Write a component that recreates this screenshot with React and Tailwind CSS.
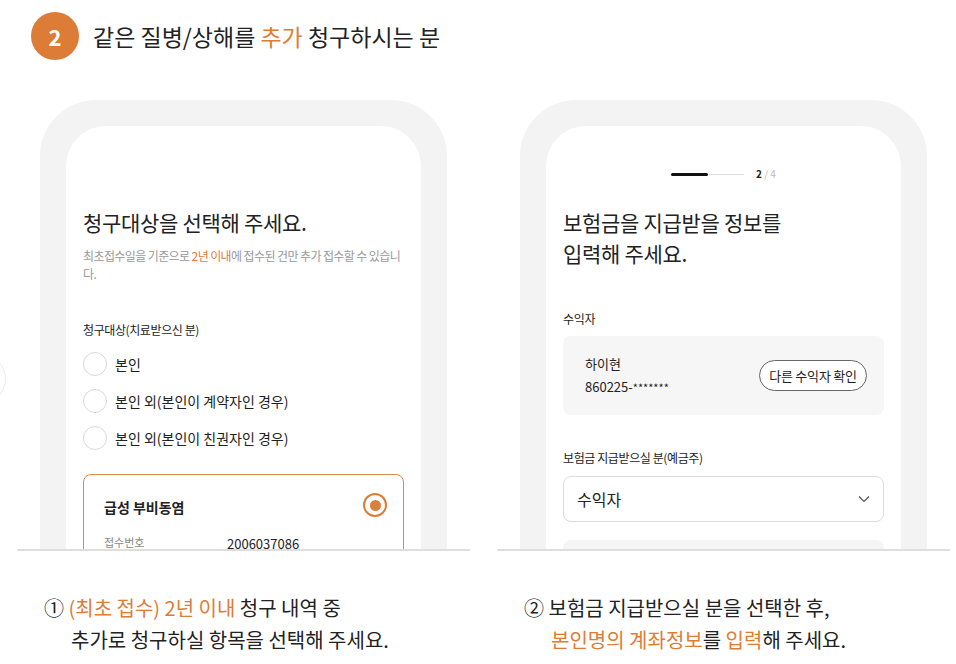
import React from "react";

const font = { fontFamily: '"Noto Sans CJK KR", "Noto Sans", sans-serif' };

function Radio({ label }) {
  return (
    <div className="flex items-center gap-[8px] h-[24px]">
      <span className="w-[24px] h-[24px] rounded-full border border-[#d9d9d9] bg-white shrink-0" />
      <span className="text-[14px] leading-[24px] text-[#222]">{label}</span>
    </div>
  );
}

function Phone({ children }) {
  return (
    <div className="w-[453px] h-[451px] overflow-hidden border-b-2 border-[#dedede] px-[23px]">
      <div className="h-full bg-[#f3f3f3] rounded-t-[56px] pt-[26px] px-[26px]">
        <div className="h-full bg-white rounded-t-[40px] px-[17px]">{children}</div>
      </div>
    </div>
  );
}

export default function App() {
  return (
    <div className="w-[956px] h-[664px] bg-white relative overflow-hidden text-[#222]" style={font}>
      {/* header */}
      <div className="flex items-center pl-[31px] pt-[12px] gap-[14px] h-[60px]">
        <div className="w-[48px] h-[48px] rounded-full bg-[#dd7c36] flex items-center justify-center text-white text-[22px] font-bold">
          2
        </div>
        <div className="text-[23px] font-normal text-[#222]">
          같은 질병/상해를 <span className="text-[#dd7c36]">추가</span> 청구하시는 분
        </div>
      </div>

      {/* left carousel edge circle */}
      <div className="absolute left-[-44px] top-[354px] w-[50px] h-[50px] rounded-full border border-[#ebebeb]" />

      <div className="flex pl-[17px] gap-[27px] mt-[40px]">
        {/* left column */}
        <div className="flex flex-col">
          <Phone>
            <div className="pt-[81px]">
              <div className="text-[21px] leading-[30px] tracking-[-0.3px]">청구대상을 선택해 주세요.</div>
              <p className="mt-[10px] text-[12px] leading-[18px] text-[#9a9a9a] tracking-[-0.6px]">
                최초접수일을 기준으로 <span className="text-[#dd7c36]">2년 이내</span>에 접수된 건만 추가 접수할 수 있습니다.
              </p>
              <div className="mt-[38px] text-[12px] leading-[18px] text-[#222] tracking-[-0.4px]">청구대상(치료받으신 분)</div>
              <div className="mt-[13px] flex flex-col gap-[13px]">
                <Radio label="본인" />
                <Radio label="본인 외(본인이 계약자인 경우)" />
                <Radio label="본인 외(본인이 친권자인 경우)" />
              </div>
              <div className="mt-[24px] border border-[#dd8a4a] rounded-[8px] pl-[20px] pr-[16px] pt-[16px] pb-[20px]">
                <div className="flex items-center justify-between">
                  <span className="text-[14px] font-bold leading-[24px] mt-[4px]">급성 부비동염</span>
                  <span className="w-[24px] h-[24px] rounded-full border-2 border-[#dd7c36] flex items-center justify-center">
                    <span className="w-[11px] h-[11px] rounded-full bg-[#d9803d]" />
                  </span>
                </div>
                <div className="flex items-center mt-[12px]">
                  <span className="w-[123px] text-[11px] text-[#888] leading-[16px]">접수번호</span>
                  <span className="text-[13px] leading-[18px] mt-[4px]">2006037086</span>
                </div>
              </div>
            </div>
          </Phone>
          <div className="mt-[41px] pl-[27px] text-[20px] leading-[32px] text-[#222]">
            <div>
              ① <span className="text-[#dd7c36]">(최초 접수) 2년 이내</span> 청구 내역 중
            </div>
            <div className="pl-[27px]">추가로 청구하실 항목을 선택해 주세요.</div>
          </div>
        </div>

        {/* right column */}
        <div className="flex flex-col">
          <Phone>
            <div className="pt-[42px]">
              <div className="flex items-center justify-center gap-[12px] h-[12px]">
                <div className="flex items-center">
                  <div className="w-[37px] h-[3px] bg-[#111] rounded-full" />
                  <div className="w-[36px] h-px bg-[#ddd]" />
                </div>
                <div className="text-[10px] leading-[12px]">
                  <span className="font-bold text-[#222]">2</span>
                  <span className="text-[#bbb]"> / 4</span>
                </div>
              </div>
              <div className="mt-[27px] text-[21px] leading-[31px] tracking-[-0.3px]">
                보험금을 지급받을 정보를
                <br />
                입력해 주세요.
              </div>
              <div className="mt-[41px] text-[12px] leading-[18px] tracking-[-0.3px]">수익자</div>
              <div className="mt-[8px] h-[79px] bg-[#f6f6f6] rounded-[8px] flex items-center justify-between pl-[22px] pr-[17px]">
                <div className="text-[13px] leading-[23px]">
                  <div>하이현</div>
                  <div>
                    860225-<span className="text-[11px]">*******</span>
                  </div>
                </div>
                <div className="h-[31px] w-[108px] rounded-full border border-[#666] bg-white flex items-center justify-center text-[13px] tracking-[-0.2px]">
                  다른 수익자 확인
                </div>
              </div>
              <div className="mt-[34px] text-[12px] leading-[18px] tracking-[-0.4px]">보험금 지급받으실 분(예금주)</div>
              <div className="mt-[9px] h-[46px] border border-[#dcdcdc] rounded-[8px] flex items-center justify-between pl-[13px] pr-[13px]">
                <span className="text-[16px]">수익자</span>
                <svg width="12" height="8" viewBox="0 0 12 8" fill="none">
                  <polyline points="1,1.5 6,6.5 11,1.5" stroke="#555" strokeWidth="1.2" />
                </svg>
              </div>
              <div className="mt-[18px] h-[40px] bg-[#f5f5f5] rounded-[8px]" />
            </div>
          </Phone>
          <div className="mt-[41px] pl-[27px] text-[20px] leading-[32px] text-[#222]">
            <div>② 보험금 지급받으실 분을 선택한 후,</div>
            <div className="pl-[27px]">
              <span className="text-[#dd7c36]">본인명의 계좌정보</span>를 <span className="text-[#dd7c36]">입력</span>해 주세요.
            </div>
          </div>
        </div>
      </div>
    </div>
  );
}
